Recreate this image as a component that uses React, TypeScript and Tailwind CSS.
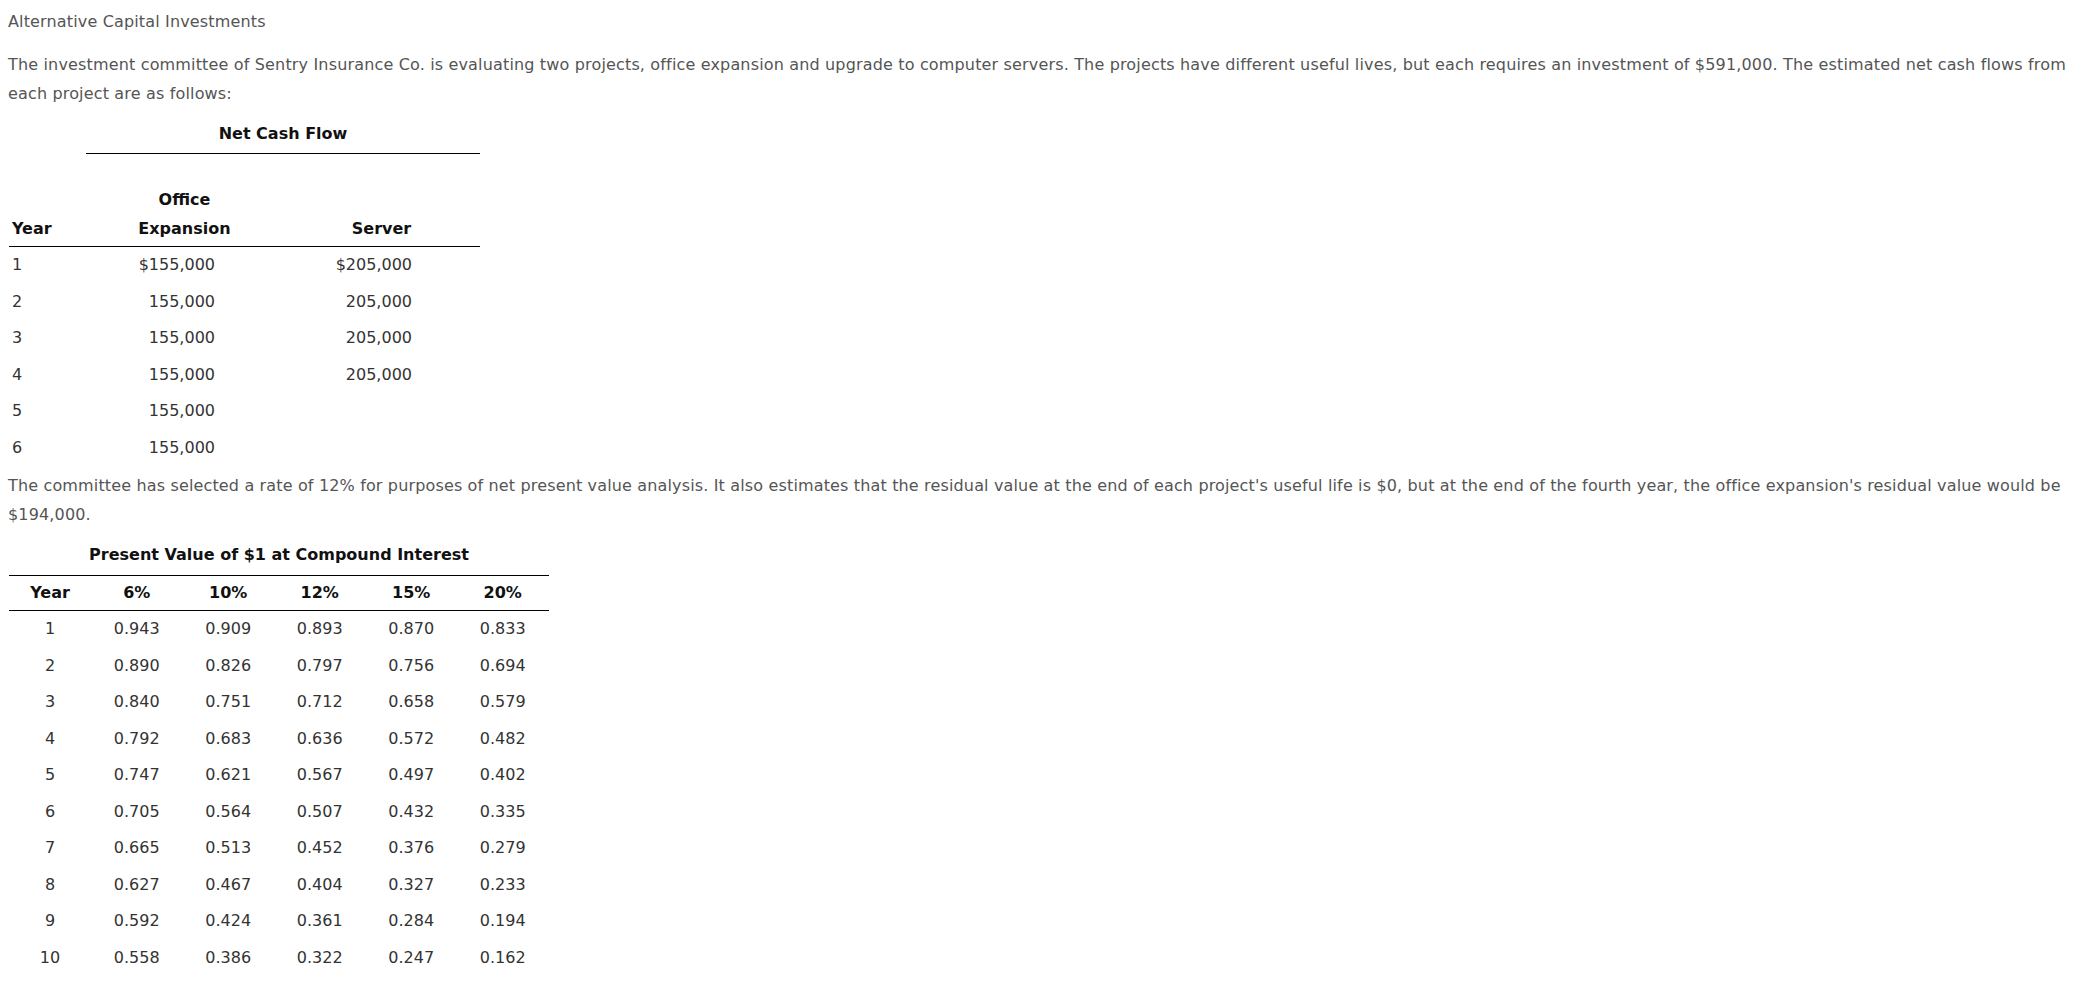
const cashFlows = [
  { year: 1, office: "$155,000", server: "$205,000" },
  { year: 2, office: "155,000", server: "205,000" },
  { year: 3, office: "155,000", server: "205,000" },
  { year: 4, office: "155,000", server: "205,000" },
  { year: 5, office: "155,000", server: "" },
  { year: 6, office: "155,000", server: "" },
];

const rates = ["6%", "10%", "12%", "15%", "20%"];

const pvTable = [
  ["0.943", "0.909", "0.893", "0.870", "0.833"],
  ["0.890", "0.826", "0.797", "0.756", "0.694"],
  ["0.840", "0.751", "0.712", "0.658", "0.579"],
  ["0.792", "0.683", "0.636", "0.572", "0.482"],
  ["0.747", "0.621", "0.567", "0.497", "0.402"],
  ["0.705", "0.564", "0.507", "0.432", "0.335"],
  ["0.665", "0.513", "0.452", "0.376", "0.279"],
  ["0.627", "0.467", "0.404", "0.327", "0.233"],
  ["0.592", "0.424", "0.361", "0.284", "0.194"],
  ["0.558", "0.386", "0.322", "0.247", "0.162"],
];

export default function App() {
  return (
    <div className="min-h-screen bg-white px-2 pt-[7px] font-['DejaVu_Sans',Verdana,sans-serif] text-[16px] text-[#555]">
      <div className="leading-[29px] tracking-[0.15px]">Alternative Capital Investments</div>

      <p className="mt-[14px] leading-[29px] tracking-[0.16px]">
        The investment committee of Sentry Insurance Co. is evaluating two projects, office expansion and upgrade to
        computer servers. The projects have different useful lives, but each requires an investment of $591,000. The
        estimated net cash flows from each project are as follows:
      </p>

      {/* Net cash flow table */}
      <div className="ml-px w-[471px] text-[#333]">
        <div className="grid grid-cols-[77px_394px]">
          <div />
          <div className="border-b border-black pt-[11px] pb-[5px] text-center font-bold leading-[29px] text-[#111]">
            Net Cash Flow
          </div>
        </div>
        <div className="grid grid-cols-[77px_197px_197px] items-end border-b border-black pt-[31px] pb-[3px] font-bold leading-[29px] text-[#111]">
          <div className="pl-[3px]">Year</div>
          <div className="text-center">
            Office
            <br />
            Expansion
          </div>
          <div className="text-center">Server</div>
        </div>
        {cashFlows.map((row) => (
          <div key={row.year} className="grid h-[36.5px] grid-cols-[77px_197px_197px] items-center">
            <div className="pl-[3px]">{row.year}</div>
            <div className="pr-[68px] text-right">{row.office}</div>
            <div className="pr-[68px] text-right">{row.server}</div>
          </div>
        ))}
      </div>

      <p className="mt-[5px] leading-[29px] tracking-[0.15px]">
        The committee has selected a rate of 12% for purposes of net present value analysis. It also estimates that the
        residual value at the end of each project's useful life is $0, but at the end of the fourth year, the office
        expansion's residual value would be $194,000.
      </p>

      {/* Present value table */}
      <div className="ml-px mt-[11px] w-[540px] text-[#333]">
        <div className="pb-[6px] text-center font-bold leading-[29px] text-[#111]">
          Present Value of $1 at Compound Interest
        </div>
        <div className="grid h-[36px] grid-cols-[82px_repeat(5,91.5px)] items-center border-y border-black text-center font-bold text-[#111]">
          <div>Year</div>
          {rates.map((r) => (
            <div key={r}>{r}</div>
          ))}
        </div>
        {pvTable.map((row, i) => (
          <div key={i} className="grid h-[36.5px] grid-cols-[82px_repeat(5,91.5px)] items-center text-center">
            <div>{i + 1}</div>
            {row.map((v, j) => (
              <div key={j}>{v}</div>
            ))}
          </div>
        ))}
      </div>
    </div>
  );
}
